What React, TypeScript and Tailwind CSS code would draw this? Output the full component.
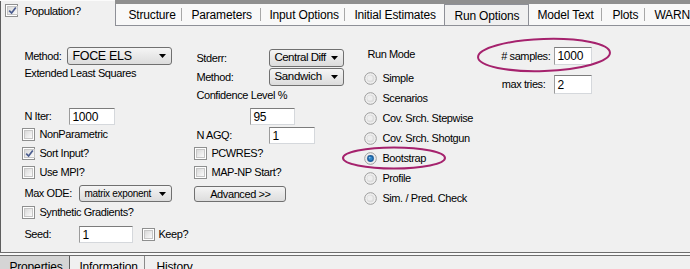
import React from 'react'

const font = "font-['Liberation_Sans',Arial,sans-serif]"

const CheckBox = ({ checked = false }: { checked?: boolean }) => (
    <span className="w-[13px] h-[13px] shrink-0 border border-[#8e8f8f] bg-white p-[1px] flex">
        <span className="flex-1 border border-[#c6c6c6] bg-linear-to-br from-[#d9d9d9] to-[#fbfbfb] flex items-center justify-center">
            {checked && (
                <svg width="9" height="9" viewBox="0 0 9 9">
                    <path d="M1.2 4.6 L3.6 7 L7.8 1.6" fill="none" stroke="#4a5c8f" strokeWidth="1.7" />
                </svg>
            )}
        </span>
    </span>
)

const Radio = ({ checked = false }: { checked?: boolean }) => (
    <svg width="13" height="13" viewBox="0 0 13 13" className="shrink-0">
        <circle cx="6.5" cy="6.5" r="5.8" fill="#f3f3f3" stroke="#9a9a9a" strokeWidth="1" />
        <circle cx="6.5" cy="6.5" r="4" fill="#dedede" />
        <circle cx="6" cy="6" r="2.6" fill="#eeeeee" />
        {checked && (
            <>
                <circle cx="6.5" cy="6.5" r="3.4" fill="#1d5f9e" />
                <circle cx="6.5" cy="6.5" r="2" fill="#2f86c8" />
                <circle cx="5.6" cy="5.6" r="0.9" fill="#8fc4ea" />
            </>
        )}
    </svg>
)

const Select = ({ value, className = '', textClass = 'text-[12px]' }: { value: string; className?: string; textClass?: string }) => (
    <div className={`rounded-[3px] border border-[#707070] bg-linear-to-b from-[#f5f5f5] to-[#dcdcdc] flex items-center pl-[4px] pr-[5px] ${className}`}>
        <span className={`flex-1 leading-none whitespace-nowrap overflow-hidden ${textClass}`}>{value}</span>
        <svg width="7" height="4" viewBox="0 0 7 4" className="shrink-0 ml-[2px]">
            <path d="M0 0 H7 L3.5 4 Z" fill="#000" />
        </svg>
    </div>
)

const TextBox = ({ value, className = '' }: { value: string; className?: string }) => (
    <div className={`bg-white border border-[#d5d8dc] border-t-[#7c7c7c] border-l-[#9b9b9b] flex items-center pl-[2px] text-[12px] leading-none tracking-[-0.2px] ${className}`}>
        {value}
    </div>
)

const CheckRow = ({ label, checked = false }: { label: string; checked?: boolean }) => (
    <div className="h-[19px] flex items-center gap-[4px]">
        <CheckBox checked={checked} />
        <span>{label}</span>
    </div>
)

const RadioRow = ({ label, checked = false }: { label: string; checked?: boolean }) => (
    <div className="h-[20px] flex items-center gap-[5px] pl-[2px]">
        <Radio checked={checked} />
        <span>{label}</span>
    </div>
)

const Sep = () => <span className="w-px h-[13px] bg-[#a7a7a7] self-center" />

const App = () => {
    return (
        <div className={`relative w-[690px] h-[269px] overflow-hidden bg-[#f0f0f0] text-black text-[11px] tracking-[-0.4px] ${font} flex`}>
            <div className="w-[3px] bg-[#5e5e5e]" />
            <div className="flex-1 flex flex-col">
                {/* header: population + tab strip */}
                <div className="h-[26px] shrink-0 flex">
                    <div className="w-[115px] border-t border-[#fbfbfb] flex items-start pt-[3px] pl-[5px] gap-[6px]">
                        <CheckBox checked />
                        <span className="text-[11.5px] leading-[14px]">Population?</span>
                    </div>
                    <div className="flex-1 flex flex-col min-w-0">
                        <div className="h-[4px] bg-[#8f8f8f]" />
                        <div className="flex-1 flex overflow-hidden bg-[#f8f8f8] border-l border-b border-[#8e9097] text-[12px] tracking-[-0.15px] leading-none">
                            <div className="w-[65px] shrink-0 pl-[12px] flex items-center">Structure</div>
                            <Sep />
                            <div className="w-[78px] shrink-0 pl-[9px] flex items-center">Parameters</div>
                            <Sep />
                            <div className="w-[83px] shrink-0 pl-[8px] flex items-center">Input Options</div>
                            <Sep />
                            <div className="w-[99px] shrink-0 pl-[9px] flex items-center">Initial Estimates</div>
                            <div className="w-[85px] shrink-0 -mb-px bg-[#f0f0f0] border-x border-t border-[#8e9097] pl-[9px] flex items-center">Run Options</div>
                            <div className="w-[72px] shrink-0 pl-[8px] flex items-center">Model Text</div>
                            <Sep />
                            <div className="w-[42px] shrink-0 pl-[10px] flex items-center">Plots</div>
                            <Sep />
                            <div className="flex-1 min-w-0 pl-[9px] flex items-center whitespace-nowrap overflow-hidden">WARN</div>
                        </div>
                    </div>
                </div>

                {/* run options content */}
                <div className="h-[226px] shrink-0 flex pl-[22px]">
                    {/* column 1 */}
                    <div className="w-[172px] flex flex-col">
                        <div className="mt-[21px] h-[18px] flex items-center">
                            <span className="w-[45px] pl-[2px]">Method:</span>
                            <Select value="FOCE ELS" className="w-[105px] h-[18px]" textClass="text-[12.5px] tracking-[-0.3px]" />
                        </div>
                        <div className="h-[16px] flex items-center pl-[2px]">Extended Least Squares</div>
                        <div className="mt-[27px] h-[17px] flex items-center">
                            <span className="w-[47px] pl-[2px]">N Iter:</span>
                            <TextBox value="1000" className="w-[46px] h-[17px]" />
                        </div>
                        <CheckRow label="NonParametric" />
                        <CheckRow label="Sort Input?" checked />
                        <CheckRow label="Use MPI?" />
                        <div className="mt-[3px] h-[17px] flex items-center">
                            <span className="w-[57px] pl-[2px]">Max ODE:</span>
                            <Select value="matrix exponent" className="w-[93px] h-[17px]" textClass="text-[10px] tracking-[-0.3px]" />
                        </div>
                        <div className="h-[20px] flex items-center gap-[4px]">
                            <CheckBox />
                            <span>Synthetic Gradients?</span>
                        </div>
                        <div className="mt-[4px] h-[17px] flex items-center">
                            <span className="w-[57px] pl-[2px]">Seed:</span>
                            <TextBox value="1" className="w-[54px] h-[17px]" />
                            <span className="ml-[9px]"><CheckBox /></span>
                            <span className="ml-[3px]">Keep?</span>
                        </div>
                    </div>

                    {/* column 2 */}
                    <div className="w-[168px] flex flex-col">
                        <div className="mt-[23px] h-[18px] flex items-center">
                            <span className="w-[75px] pl-[2px]">Stderr:</span>
                            <Select value="Central Diff" className="w-[75px] h-[18px]" textClass="text-[11.5px] tracking-[-0.5px]" />
                        </div>
                        <div className="mt-px h-[18px] flex items-center">
                            <span className="w-[75px] pl-[2px]">Method:</span>
                            <Select value="Sandwich" className="w-[75px] h-[18px]" textClass="text-[11.5px] tracking-[-0.3px]" />
                        </div>
                        <div className="mt-px h-[16px] flex items-center pl-[2px]">Confidence Level %</div>
                        <div className="mt-[5px] h-[17px] flex items-center pl-[56px]">
                            <TextBox value="95" className="w-[45px] h-[17px]" />
                        </div>
                        <div className="mt-[2px] h-[17px] flex items-center">
                            <span className="w-[75px] pl-[2px]">N AGQ:</span>
                            <TextBox value="1" className="w-[46px] h-[17px]" />
                        </div>
                        <CheckRow label="PCWRES?" />
                        <CheckRow label="MAP-NP Start?" />
                        <div className="mt-[4px] w-[92px] h-[16px] rounded-[3px] border border-[#707070] bg-linear-to-b from-[#f4f4f4] to-[#dddddd] flex items-center justify-center">
                            Advanced &gt;&gt;
                        </div>
                    </div>

                    {/* column 3: run mode */}
                    <div className="w-[111px] flex flex-col">
                        <div className="mt-[21px] h-[14px] flex items-center pl-[5px]">Run Mode</div>
                        <div className="mt-[7px] flex flex-col">
                            <RadioRow label="Simple" />
                            <RadioRow label="Scenarios" />
                            <RadioRow label="Cov. Srch. Stepwise" />
                            <RadioRow label="Cov. Srch. Shotgun" />
                            <RadioRow label="Bootstrap" checked />
                            <RadioRow label="Profile" />
                            <RadioRow label="Sim. / Pred. Check" />
                        </div>
                    </div>

                    {/* column 4: bootstrap settings */}
                    <div className="flex flex-col">
                        <div className="mt-[21px] h-[18px] flex items-center">
                            <span className="w-[81px] text-right pr-[4px]">#&nbsp;samples:</span>
                            <TextBox value="1000" className="w-[38px] h-[18px]" />
                        </div>
                        <div className="mt-[10px] h-[19px] flex items-center">
                            <span className="w-[81px] text-right pr-[9px]">max tries:</span>
                            <TextBox value="2" className="w-[38px] h-[19px]" />
                        </div>
                    </div>
                </div>

                {/* splitter */}
                <div className="h-px shrink-0 bg-[#6e6e6e]" />
                <div className="h-[2px] shrink-0 bg-[#f9f9f9]" />
                <div className="h-px shrink-0 bg-[#6e6e6e]" />

                {/* bottom tabs */}
                <div className="h-[20px] shrink-0 flex text-[12px] tracking-[-0.15px] leading-none">
                    <div className="w-[70px] bg-[#d5d5d5] border-r border-[#5f5f5f] pl-[9px] pt-[5px]">Properties</div>
                    <div className="w-[75px] border-r border-[#8a8a8a] pl-[9px] pt-[5px]">Information</div>
                    <div className="pl-[11px] pt-[5px]">History</div>
                </div>
            </div>

            {/* highlight annotations */}
            <svg className="absolute inset-0 pointer-events-none" width="690" height="269" viewBox="0 0 690 269">
                <ellipse cx="544" cy="55" rx="66" ry="16" fill="none" stroke="#a5226d" strokeWidth="2" transform="rotate(-2 544 55)" />
                <ellipse cx="394" cy="158" rx="51" ry="10.5" fill="none" stroke="#a5226d" strokeWidth="2" />
            </svg>
        </div>
    )
}

export default App
